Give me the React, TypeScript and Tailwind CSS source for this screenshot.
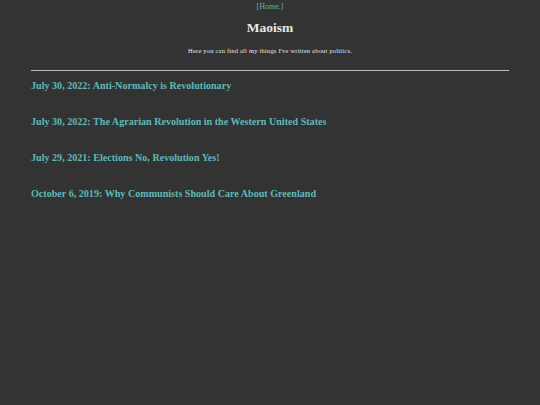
export default function App() {
  const posts = [
    'July 30, 2022: Anti-Normalcy is Revolutionary',
    'July 30, 2022: The Agrarian Revolution in the Western United States',
    'July 29, 2021: Elections No, Revolution Yes!',
    'October 6, 2019: Why Communists Should Care About Greenland',
  ]

  return (
    <div className="min-h-[405px] bg-[#333333] text-[#e8e8e8] font-['Liberation_Serif',serif] leading-none">
      <div className="px-[31px]">
        <div className="text-center pt-[3px]">
          <div className="text-[8px] leading-[8px]">
            <a href="#" className="text-[#5fb3b3]">[Home.]</a>
          </div>
          <h1 className="text-[13.5px] font-bold mt-[10px] leading-[14px]">Maoism</h1>
          <p className="text-[6.5px] mt-[12px] leading-[7px] tracking-[0.2px]">Here you can find all my things I've written about politics.</p>
        </div>
        <hr className="mt-[16px] border-t border-[#bdbdbd] border-b-0" />
        <div className="flex flex-col gap-[23px] mt-[8px]">
          {posts.map((p) => (
            <a key={p} href="#" className="text-[10.1px] font-bold text-[#5fb8b8] leading-[13px]">
              {p}
            </a>
          ))}
        </div>
      </div>
    </div>
  )
}
